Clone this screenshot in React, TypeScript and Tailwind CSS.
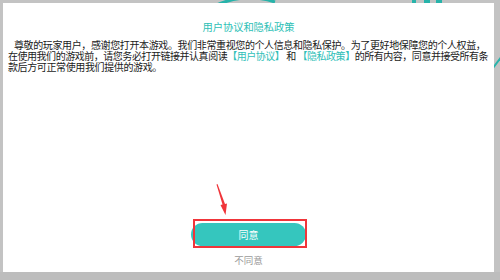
const cjk = { fontFamily: '"Noto Sans CJK SC", "Noto Sans", sans-serif' };

function Backdrop() {
  return (
    <svg className="absolute inset-0" width="500" height="280" viewBox="0 0 500 280">
      <rect width="500" height="280" fill="#c3c3c3" />
      <path d="M214 6 Q245 -8 275 2" stroke="#27b3aa" strokeWidth="3" fill="none" />
      <rect x="412" y="0" width="4" height="3" fill="#27b3aa" />
      <rect x="424" y="0" width="6" height="3" fill="#27b3aa" />
      <rect x="436" y="0" width="6" height="3" fill="#27b3aa" />
      <path d="M490 72 L502 56" stroke="#27b3aa" strokeWidth="2" />
      <rect x="0" y="272" width="500" height="8" fill="#bdbdbd" />
    </svg>
  );
}

function Arrow() {
  return (
    <svg className="absolute left-[206px] top-[176px]" width="24" height="40" viewBox="0 0 24 40">
      <path
        d="M7.5 5.5 L13.5 25.5 L11.5 26 L16.5 36 L18 24.5 L16 25 L8.5 5 Z"
        fill="#f0353a"
      />
    </svg>
  );
}

export default function App() {
  return (
    <div
      className="relative w-[500px] h-[280px] overflow-hidden pt-[3px] pl-[3px] pr-[6px] pb-[8px]"
      style={cjk}
    >
      <Backdrop />
      <div className="relative h-full bg-white flex flex-col items-center pt-[18px] pb-[6px]">
        <h1 className="text-[10.3px] leading-[12px] text-[#2dbfb6] tracking-[-0.1px]">
          用户协议和隐私政策
        </h1>
        <div className="mt-[6px] w-full pl-[5px] text-[10px] leading-[11px] text-[#1a1a1a] whitespace-nowrap">
          <div className="pl-[6px] tracking-[-0.38px]">
            尊敬的玩家用户，感谢您打开本游戏。我们非常重视您的个人信息和隐私保护。为了更好地保障您的个人权益，
          </div>
          <div className="tracking-[-0.47px]">
            在使用我们的游戏前，请您务必打开链接并认真阅读
            <span className="text-[#2fc0b8]">【用户协议】</span> 和{' '}
            <span className="text-[#2fc0b8]">【隐私政策】</span>
            的所有内容，同意并接受所有条
          </div>
          <div className="tracking-[-0.38px]">款后方可正常使用我们提供的游戏。</div>
        </div>
        <div className="flex-1" />
        <div className="relative">
          <button className="w-[115px] h-[23px] rounded-full bg-[#35c6be] text-white text-[10px] mt-[1px]">
            同意
          </button>
          <div className="absolute left-[2px] right-[-1px] top-[-1px] bottom-[-2px] border-2 border-[#f0353a]" />
        </div>
        <div className="mt-[8px] text-[9.5px] leading-[12px] text-[#9a9a9a]">不同意</div>
        <Arrow />
      </div>
    </div>
  );
}
